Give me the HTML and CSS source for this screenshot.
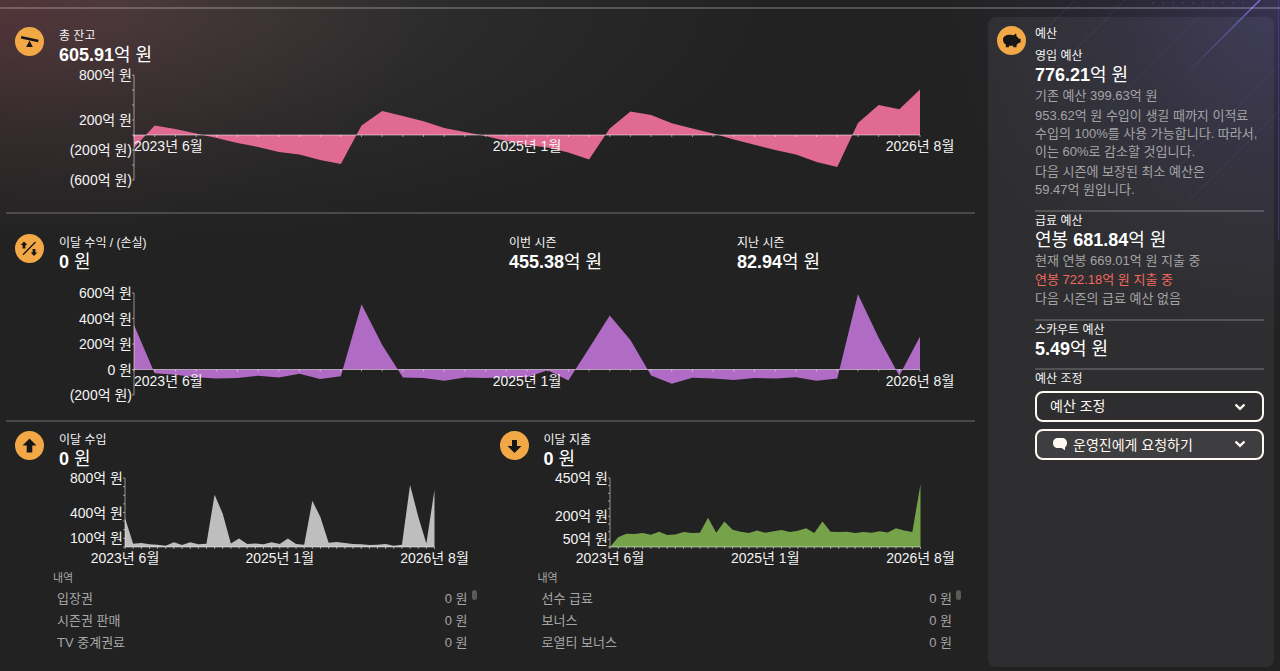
FILE: index.html
```html
<!DOCTYPE html>
<html lang="ko">
<head>
  <meta charset="utf-8">
  <title>재정</title>
  <meta content="width=device-width, initial-scale=1" name="viewport">
  <link rel="stylesheet" href="styles.css">
</head>
<body>
  <svg class="backdrop" width="320" height="240" viewBox="0 0 320 240" aria-hidden="true">
    <defs>
      <linearGradient id="ray" gradientUnits="userSpaceOnUse" x1="300" y1="0" x2="225" y2="75">
        <stop offset="0" stop-color="#8c78f0" stop-opacity="0.9"/>
        <stop offset="0.4" stop-color="#6a5cc0" stop-opacity="0.6"/>
        <stop offset="1" stop-color="#6a5cc0" stop-opacity="0"/>
      </linearGradient>
      <pattern id="dots" width="10" height="6" patternUnits="userSpaceOnUse">
        <circle cx="3" cy="3" r="1" fill="#5b50a0"/>
      </pattern>
    </defs>
    <rect x="190" y="0" width="100" height="6" fill="url(#dots)" opacity="0.4"/>
    <path d="M300 0L225 75" stroke="url(#ray)" stroke-width="1.5"/>
    <path d="M240 15L140 115M320 65L205 180M320 110L230 200M165 0L115 50M115 0L90 25" stroke="#6a60b0" stroke-opacity="0.18"/>
    <path d="M318.500 0V240" stroke="#4a3f90" stroke-opacity="0.7"/>
  </svg>

  <header class="topline"></header>

  <div class="page">
    <main>
      <section class="panel">
        <div class="head">
          <svg class="icon" viewBox="0 0 29 29" aria-hidden="true">
            <circle cx="14.500" cy="14.500" r="14.500"/>
            <path d="M6.300 8.900L23.600 12.700L23.100 15.300L5.800 11.500Z"/>
            <path d="M14.500 13.500L17.800 20H11.200Z"/>
          </svg>
          <div class="stat">
            <h2>총 잔고</h2>
            <p class="value"><b>605.91</b>억 원</p>
          </div>
        </div>
        <svg class="chart chart-balance" data-chart="balance" role="img" aria-label="총 잔고"></svg>
      </section>

      <section class="panel panel-profit">
        <div class="head">
          <svg class="icon" viewBox="0 0 29 29" aria-hidden="true">
            <circle cx="14.500" cy="14.500" r="14.500"/>
            <path class="slash" d="M8 20.700L20.500 8"/>
            <path d="M9 7.500L12.300 11H10.400V14.600H7.600V11H5.700Z"/>
            <path d="M19 22L22.300 18.500H20.400V15H17.600V18.500H15.700Z"/>
          </svg>
          <div class="stats">
            <div class="stat">
              <h2>이달 수익 / (손실)</h2>
              <p class="value"><b>0</b> 원</p>
            </div>
            <div class="stat">
              <h2>이번 시즌</h2>
              <p class="value"><b>455.38</b>억 원</p>
            </div>
            <div class="stat">
              <h2>지난 시즌</h2>
              <p class="value"><b>82.94</b>억 원</p>
            </div>
          </div>
        </div>
        <svg class="chart chart-profit" data-chart="profit" role="img" aria-label="이달 수익 / (손실)"></svg>
      </section>

      <div class="columns">
        <section>
          <div class="head">
            <svg class="icon" viewBox="0 0 29 29" aria-hidden="true">
              <circle cx="14.500" cy="14.500" r="14.500"/>
              <path d="M14.500 7.500L21.500 14.500H17.300V21.500H11.700V14.500H7.500Z"/>
            </svg>
            <div class="stat">
              <h2>이달 수입</h2>
              <p class="value"><b>0</b> 원</p>
            </div>
          </div>
          <svg class="chart chart-small chart-income" data-chart="income" role="img" aria-label="이달 수입"></svg>
          <div class="breakdown">
            <table>
              <caption>내역</caption>
              <tr><th scope="row">입장권</th><td>0 원</td></tr>
              <tr><th scope="row">시즌권 판매</th><td>0 원</td></tr>
              <tr><th scope="row">TV 중계권료</th><td>0 원</td></tr>
            </table>
            <span class="thumb"></span>
          </div>
        </section>

        <section>
          <div class="head">
            <svg class="icon" viewBox="0 0 29 29" aria-hidden="true">
              <circle cx="14.500" cy="14.500" r="14.500"/>
              <path d="M14.500 22L21.500 15H17V9H12V15H7.500Z"/>
            </svg>
            <div class="stat">
              <h2>이달 지출</h2>
              <p class="value"><b>0</b> 원</p>
            </div>
          </div>
          <svg class="chart chart-small chart-spend" data-chart="spend" role="img" aria-label="이달 지출"></svg>
          <div class="breakdown">
            <table>
              <caption>내역</caption>
              <tr><th scope="row">선수 급료</th><td>0 원</td></tr>
              <tr><th scope="row">보너스</th><td>0 원</td></tr>
              <tr><th scope="row">로열티 보너스</th><td>0 원</td></tr>
            </table>
            <span class="thumb"></span>
          </div>
        </section>
      </div>
    </main>

    <aside class="budget">
      <svg class="icon" viewBox="0 0 29 29" aria-hidden="true">
        <circle cx="14.500" cy="14.500" r="14.500"/>
        <path d="M6 13.500C6 10.500 9 8.800 13 8.800C14.500 8.800 15.700 9 16.700 9.300C17.300 8.300 18.200 7.600 19.200 7.400L19.500 10.300C20.500 11 21.200 11.800 21.500 12.600L23.600 12.900V16.400L21.300 16.900C20.800 17.800 20.200 18.400 19.500 18.900V21.200H16.300V19.800H12V21.200H8.800V18.600C7 17.500 6 15.800 6 13.500Z"/>
      </svg>
      <div class="budget-body">
        <h2 class="budget-title">예산</h2>

        <div class="block">
          <h3>영입 예산</h3>
          <p class="value"><b>776.21</b>억 원</p>
          <div class="notes">
            <p>기존 예산 399.63억 원</p>
            <p class="long">953.62억 원 수입이 생길 때까지 이적료 수입의 100%를 사용 가능합니다. 따라서, 이는 60%로 감소할 것입니다.</p>
            <p class="long">다음 시즌에 보장된 최소 예산은<br>59.47억 원입니다.</p>
          </div>
        </div>

        <div class="block">
          <h3>급료 예산</h3>
          <p class="value">연봉 <b>681.84</b>억 원</p>
          <div class="notes">
            <p>현재 연봉 669.01억 원 지출 중</p>
            <p class="over">연봉 722.18억 원 지출 중</p>
            <p>다음 시즌의 급료 예산 없음</p>
          </div>
        </div>

        <div class="block">
          <h3>스카우트 예산</h3>
          <p class="value"><b>5.49</b>억 원</p>
        </div>

        <div class="block">
          <label for="adjust">예산 조정</label>
          <div class="dropdown">
            <select id="adjust">
              <option>예산 조정</option>
            </select>
            <svg class="chevron" viewBox="0 0 12 8" aria-hidden="true"><path d="M1.500 1.500L6 5.800L10.500 1.500"/></svg>
          </div>
          <button type="button" class="request" aria-haspopup="menu">
            <svg class="bubble" viewBox="0 0 16 14" aria-hidden="true"><path d="M6 1H10C13 1 15 3 15 6C15 8 14.200 9.500 13 10.300V13.200L9.600 11H6C3 11 1 9 1 6C1 3 3 1 6 1Z"/></svg>
            운영진에게 요청하기
            <svg class="chevron" viewBox="0 0 12 8" aria-hidden="true"><path d="M1.500 1.500L6 5.800L10.500 1.500"/></svg>
          </button>
        </div>
      </div>
    </aside>
  </div>

  <script src="charts.js"></script>
</body>
</html>
```

FILE: styles.css
```css
* {
  box-sizing: border-box;
}
body {
  margin: 0;
  min-height: 100vh;
  background-color: #222;
  background-image:
    radial-gradient(ellipse 420px 240px at 0 0, rgba(125, 50, 62, 0.38), rgba(125, 50, 62, 0.12) 50%, rgba(125, 50, 62, 0)),
    radial-gradient(ellipse 640px 240px at 120px 0, rgba(125, 115, 115, 0.3), rgba(125, 115, 115, 0.1) 55%, rgba(125, 115, 115, 0)),
    radial-gradient(ellipse 330px 330px at 100% 0, rgba(88, 76, 160, 0.38), rgba(88, 76, 160, 0.14) 50%, rgba(88, 76, 160, 0));
  background-repeat: no-repeat;
  color: #f4f4f4;
  font-family: "Liberation Sans", "Noto Sans CJK KR", sans-serif;
  font-size: 13px;
  line-height: 18px;
  word-break: keep-all;
}
h2, h3, p {
  margin: 0;
}
h2, h3, label {
  display: block;
  font-size: 12px;
  line-height: 16px;
  font-weight: normal;
}
.backdrop {
  position: absolute;
  top: 0;
  right: 0;
  z-index: -1;
  fill: none;
}
.topline {
  height: 9px;
  border-bottom: 2px solid rgba(255, 255, 255, 0.22);
}
.page {
  display: grid;
  grid-template-columns: minmax(0, 1fr) 286px;
  gap: 13px;
  min-height: calc(100vh - 9px);
  padding: 0 6px;
}

/* panels */
.panel {
  padding-top: 18px;
  border-bottom: 2px solid rgba(255, 255, 255, 0.18);
}
.panel-profit {
  padding-top: 20px;
}
.columns {
  display: grid;
  grid-template-columns: 1fr 1fr;
  padding-top: 9px;
}
.head {
  display: flex;
  gap: 15px;
  padding-left: 9px;
}
.stats {
  flex: 1;
  display: grid;
  grid-template-columns: 450fr 228fr 238fr;
}
.value {
  font-size: 18px;
  line-height: 22px;
  color: #fff;
}
.stat {
  padding-top: 1px;
}
.icon {
  flex: none;
  width: 29px;
  height: 29px;
  fill: #161616;
}
.icon circle {
  fill: #f2a847;
}
.icon .slash {
  stroke: #161616;
  stroke-width: 1.3;
}

/* charts */
.chart {
  display: block;
  width: 100%;
  height: 146px;
  overflow: visible;
}
.chart-profit {
  height: 147px;
}
.chart-small {
  height: 100px;
}
.chart text {
  fill: #f4f4f4;
  font-size: 14px;
}
.chart .axis {
  stroke: #fff;
  stroke-opacity: 0.5;
  fill: none;
}
.chart-balance .area {
  fill: #e06a92;
}
.chart-profit .area {
  fill: #b06cc4;
}
.chart-income .area {
  fill: #bebebe;
}
.chart-spend .area {
  fill: #76a34a;
}

/* breakdown lists */
.breakdown {
  position: relative;
  margin: 0 23px 0 47px;
  color: #a6a6a6;
}
.breakdown table {
  width: 100%;
  border-collapse: collapse;
}
.breakdown caption {
  padding-bottom: 2px;
  font-size: 11px;
  line-height: 16px;
  text-align: left;
}
.breakdown th, .breakdown td {
  height: 22px;
  padding: 0;
  font-weight: normal;
  text-align: left;
}
.breakdown th {
  padding-left: 4px;
}
.breakdown td {
  text-align: right;
}
.thumb {
  position: absolute;
  top: 20px;
  right: -9px;
  width: 5px;
  height: 10px;
  border-radius: 3px;
  background-color: #5a5a5a;
}

/* budget */
.budget {
  display: flex;
  gap: 9px;
  margin: 8px 0 4px;
  padding: 9px 10px 8px 9px;
  border-radius: 8px;
  background-color: rgba(160, 160, 175, 0.1);
}
.budget-body {
  flex: 1;
}
.budget-title {
  margin-bottom: 5px;
}
.block {
  padding: 1px 0 8px;
  border-bottom: 2px solid rgba(255, 255, 255, 0.18);
}
.block:last-child {
  border-bottom: none;
}
.notes {
  margin-bottom: 3px;
  color: #a4a4a6;
}
.notes p {
  margin-top: 1px;
}
.notes .long {
  margin-top: 2px;
}
.notes .over {
  color: #f0685f;
}
.dropdown {
  position: relative;
  margin-top: 4px;
}
.dropdown select, .request {
  width: 100%;
  height: 31px;
  padding: 0 16px 2px 13px;
  border: 2px solid #fff9f2;
  border-radius: 8px;
  background-color: transparent;
  color: #fff9f2;
  font-family: inherit;
  font-size: 14px;
}
.dropdown select {
  display: block;
  appearance: none;
}
.dropdown option {
  background-color: #2e2e30;
}
.request {
  display: flex;
  align-items: center;
  gap: 5px;
  margin-top: 7px;
  padding-left: 15px;
  background-color: rgba(255, 240, 240, 0.08);
}
.bubble {
  width: 16px;
  height: 14px;
  fill: #fff9f2;
}
.chevron {
  width: 12px;
  height: 8px;
  fill: none;
  stroke: #fff9f2;
  stroke-width: 2.4;
}
.request .chevron {
  margin-left: auto;
}
.dropdown .chevron {
  position: absolute;
  top: 12px;
  right: 18px;
  pointer-events: none;
}
```

FILE: charts.js
```js
// Monthly figures, 2023-06 to 2026-08, in 억 원
const charts = {
  balance: {
    min: -600, max: 800, step: 200, top: 9, height: 105, left: 128, right: 55,
    labels: [[800, '800억 원'], [200, '200억 원'], [-200, '(200억 원)'], [-600, '(600억 원)']],
    firstAnchor: 'start',
    data: [-170, 127, 80, 20, -40, -107, -160, -227, -260, -333, -387, 127, 320, 253, 183, 93, 40, -13, -80, -133,
      -167, -233, -327, 87, 313, 267, 156, 87, 20, -60, -130, -200, -260, -360, -427, 160, 400, 343, 606]
  },
  profit: {
    min: -200, max: 600, step: 200, top: 20, height: 102, left: 128, right: 55,
    labels: [[600, '600억 원'], [400, '400억 원'], [200, '200억 원'], [0, '0 원'], [-200, '(200억 원)']],
    firstAnchor: 'start',
    data: [350, -30, -41, -61, -70, -67, -49, -63, -34, -75, -52, 512, 193, -63, -67, -88, -63, -67, -60, -61,
      -6, -86, 167, 423, 232, -47, -112, -65, -70, -83, -67, -70, -60, -88, -70, 590, 250, -49, 258]
  },
  income: {
    min: 0, max: 800, step: 100, top: 8, height: 69, left: 119, right: 56,
    labels: [[800, '800억 원'], [400, '400억 원'], [100, '100억 원']],
    firstAnchor: 'middle',
    data: [336, 39, 46, 31, 27, 15, 54, 23, 54, 31, 39, 606, 386, 42, 100, 35, 42, 31, 54, 35,
      100, 35, 27, 537, 344, 50, 58, 46, 35, 31, 23, 27, 35, 15, 27, 718, 355, 42, 664]
  },
  spend: {
    min: 0, max: 450, step: 50, top: 8, height: 69, left: 119, right: 55,
    labels: [[450, '450억 원'], [200, '200억 원'], [50, '50억 원']],
    firstAnchor: 'middle',
    data: [0, 63, 87, 85, 91, 80, 100, 78, 82, 98, 91, 93, 191, 93, 167, 113, 100, 91, 108, 93,
      102, 111, 98, 106, 122, 91, 167, 100, 98, 100, 91, 98, 93, 102, 95, 122, 108, 98, 410]
  }
};

function drawChart(svg) {
  const c = charts[svg.dataset.chart];
  const last = c.data.length - 1;
  const plotWidth = svg.getBoundingClientRect().width - c.left - c.right;
  const x = i => c.left + plotWidth * i / last;
  const y = v => c.top + c.height * (c.max - v) / (c.max - c.min);
  const zero = y(0);

  const points = c.data.map((v, i) => `${x(i)},${y(v)}`).join(' ');
  let out = `<polygon class="area" points="${x(0)},${zero} ${points} ${x(last)},${zero}"/>`;

  let axis = `M${x(0)} ${y(c.max)}V${y(c.min)}M${x(0)} ${zero}H${x(last)}`;
  for (let v = c.min; v <= c.max; v += c.step) {
    axis += `M${x(0) - 2} ${y(v)}h2`;
  }
  c.data.forEach((v, i) => {
    axis += `M${x(i)} ${zero}v2`;
  });
  out += `<path class="axis" d="${axis}"/>`;

  c.labels.forEach(([v, text]) => {
    out += `<text x="${c.left - 2}" y="${y(v) + 5}" text-anchor="end">${text}</text>`;
  });
  out += `<text x="${x(0)}" y="${zero + 16}" text-anchor="${c.firstAnchor}">2023년 6월</text>`;
  out += `<text x="${x(19)}" y="${zero + 16}" text-anchor="middle">2025년 1월</text>`;
  out += `<text x="${x(last)}" y="${zero + 16}" text-anchor="middle">2026년 8월</text>`;
  svg.innerHTML = out;
}

function drawAll() {
  document.querySelectorAll('[data-chart]').forEach(drawChart);
}

drawAll();
window.addEventListener('resize', drawAll);
```
